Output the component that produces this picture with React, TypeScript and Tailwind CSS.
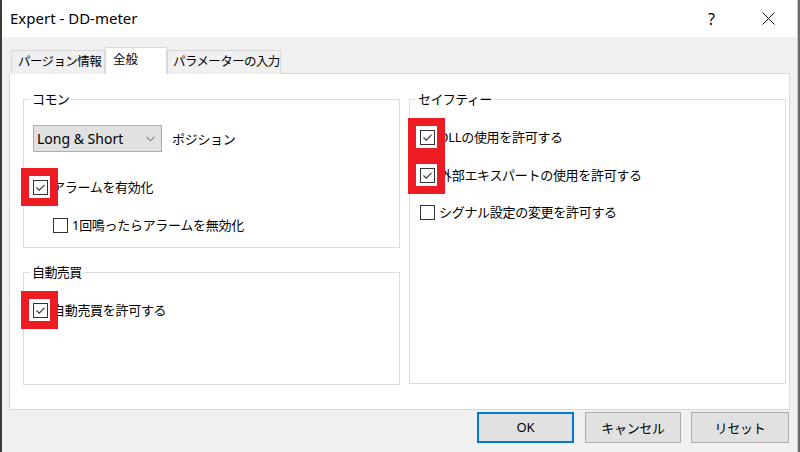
import React from 'react';

const FONT = "font-['Noto_Sans','Noto_Sans_CJK_JP',sans-serif]";
const JP = 'text-[13px] tracking-[-0.3px] text-black leading-[20px]';
const LEGEND = 'text-[13px] tracking-[-0.6px] text-black leading-[18px]';

function Box({ checked }: { checked?: boolean }) {
  return (
    <span className="w-[15px] h-[15px] shrink-0 border border-[#333] bg-white flex items-center justify-center">
      {checked && (
        <svg width="11" height="9" viewBox="0 0 11 9">
          <path d="M1.5 4.5 L4.2 7.2 L9.5 1.8" stroke="#333" strokeWidth="1.1" fill="none" />
        </svg>
      )}
    </span>
  );
}

function Check({
  label,
  checked,
  marked,
  className = '',
}: {
  label: string;
  checked?: boolean;
  marked?: boolean;
  className?: string;
}) {
  return (
    <div className={`relative flex items-center h-[20px] ${className}`}>
      <Box checked={checked} />
      <span className={`ml-[4px] ${JP}`}>{label}</span>
      {marked && (
        <span className="absolute left-[-12px] top-[-9px] w-[37px] h-[38px] border-[8px] border-[#ed1c24]" />
      )}
    </div>
  );
}

function Group({
  title,
  className,
  inner,
  children,
}: {
  title: string;
  className: string;
  inner: string;
  children: React.ReactNode;
}) {
  return (
    <fieldset className={`border border-[#dcdcdc] min-w-0 ${className}`}>
      <legend className={`ml-[6px] px-[2px] ${LEGEND}`}>{title}</legend>
      <div className={inner}>{children}</div>
    </fieldset>
  );
}

export default function App() {
  return (
    <div className={`w-[800px] h-[452px] flex overflow-hidden bg-[#f0f0f0] ${FONT}`}>
      <div className="w-[2px] bg-[#3a3a3a] shrink-0" />

      <div className="w-[795px] flex flex-col shrink-0">
        {/* title bar */}
        <div className="h-[37px] bg-white flex items-center shrink-0">
          <span className="pl-[8px] text-[15px] text-black">Expert - DD-meter</span>
          <div className="ml-auto flex h-full">
            <div className="w-[57px] flex items-center justify-center text-[16px] text-black">?</div>
            <div className="w-[57px] flex items-center justify-center">
              <svg width="13" height="13" viewBox="0 0 13 13">
                <path d="M0.5 0.5 L12.5 12.5 M12.5 0.5 L0.5 12.5" stroke="#111" strokeWidth="1" />
              </svg>
            </div>
          </div>
        </div>

        {/* body */}
        <div className="flex-1 flex flex-col pt-[10px]">
          {/* tabs */}
          <div className="flex items-end h-[27px] pl-[9px] relative z-10">
            <div className="h-[24px] w-[94px] border border-b-0 border-[#d9d9d9] bg-[#f0f0f0] pl-[6px] flex items-center text-[12.5px] tracking-[-0.6px] text-black">
              パージョン情報
            </div>
            <div className="h-[27px] w-[62px] border border-b-0 border-[#d9d9d9] bg-white pl-[7px] flex items-center pb-[2px] text-[12.5px] text-black">
              全般
            </div>
            <div className="h-[24px] w-[114px] border border-b-0 border-[#d9d9d9] bg-[#f0f0f0] pl-[5px] flex items-center text-[12.5px] tracking-[-0.6px] text-black">
              パラメーターの入力
            </div>
          </div>

          {/* panel */}
          <div className="ml-[7px] -mt-px w-[781px] h-[337px] border border-[#d9d9d9] bg-white flex gap-[9px] pl-[13px] pt-[16px]">
            <div className="w-[377px] flex flex-col">
              <Group title="コモン" className="h-[158px]" inner="pl-[9px]">
                <div className="flex items-center mt-[17px]">
                  <div className="w-[129px] h-[27px] bg-[#e1e1e1] border border-[#adadad] flex items-center pl-[3px] pr-[6px]">
                    <span className="text-[14px] text-black">Long &amp; Short</span>
                    <svg className="ml-auto" width="9" height="6" viewBox="0 0 9 6">
                      <path d="M0.5 0.8 L4.5 4.8 L8.5 0.8" stroke="#555" strokeWidth="1" fill="none" />
                    </svg>
                  </div>
                  <span className={`ml-[10px] ${JP}`}>ポジション</span>
                </div>
                <Check label="アラームを有効化" checked marked className="mt-[25px]" />
                <Check label="1回鳴ったらアラームを無効化" className="mt-[18px] ml-[20px]" />
              </Group>

              <Group title="自動売買" className="h-[122px] mt-[15px]" inner="pl-[9px]">
                <Check label="自動売買を許可する" checked marked className="mt-[19px]" />
              </Group>
            </div>

            <div className="w-[377px] flex flex-col">
              <Group title="セイフティー" className="h-[294px]" inner="pl-[10px]">
                <Check label="DLLの使用を許可する" checked marked className="mt-[19px]" />
                <Check label="外部エキスパートの使用を許可する" checked marked className="mt-[18px]" />
                <Check label="シグナル設定の変更を許可する" className="mt-[17px]" />
              </Group>
            </div>
          </div>

          {/* buttons */}
          <div className="flex justify-end mt-[2px] pr-[8px]">
            <button className="w-[97px] h-[31px] border-2 border-[#0078d7] bg-[#e1e1e1] text-[13px] text-black">
              OK
            </button>
            <button className={`ml-[11px] w-[96px] h-[31px] border border-[#adadad] bg-[#e1e1e1] ${JP}`}>
              キャンセル
            </button>
            <button className={`ml-[10px] w-[98px] h-[31px] border border-[#adadad] bg-[#e1e1e1] ${JP}`}>
              リセット
            </button>
          </div>
        </div>
      </div>

      <div className="w-[3px] shrink-0 border-l border-[#c8c8c8] bg-[#6b6b6b]" />
    </div>
  );
}
